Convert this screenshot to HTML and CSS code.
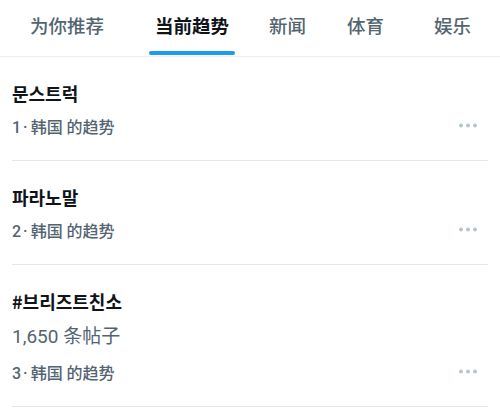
FILE: index.html
```html
<!DOCTYPE html>
<html lang="zh">
<head>
<meta charset="utf-8">
<link rel="stylesheet" href="styles.css">
</head>
<body>
<nav class="tabs">
  <a class="tab t1">为你推荐</a>
  <a class="tab t2 active">当前趋势<span class="bar"></span></a>
  <a class="tab t3">新闻</a>
  <a class="tab t4">体育</a>
  <a class="tab t5">娱乐</a>
</nav>
<ul class="list">
  <li class="item">
    <div class="title" lang="ko">문스트럭</div>
    <div class="meta"><span>1<span class="sep">·</span>韩国 的趋势</span>
      <svg class="more" width="18" height="5" viewBox="0 0 18 5"><circle cx="2" cy="2.5" r="2"/><circle cx="9" cy="2.5" r="2"/><circle cx="16" cy="2.5" r="2"/></svg>
    </div>
  </li>
  <li class="item">
    <div class="title" lang="ko">파라노말</div>
    <div class="meta"><span>2<span class="sep">·</span>韩国 的趋势</span>
      <svg class="more" width="18" height="5" viewBox="0 0 18 5"><circle cx="2" cy="2.5" r="2"/><circle cx="9" cy="2.5" r="2"/><circle cx="16" cy="2.5" r="2"/></svg>
    </div>
  </li>
  <li class="item">
    <div class="title" lang="ko">#브리즈트친소</div>
    <div class="count">1,650 条帖子</div>
    <div class="meta"><span>3<span class="sep">·</span>韩国 的趋势</span>
      <svg class="more" width="18" height="5" viewBox="0 0 18 5"><circle cx="2" cy="2.5" r="2"/><circle cx="9" cy="2.5" r="2"/><circle cx="16" cy="2.5" r="2"/></svg>
    </div>
  </li>
</ul>
</body>
</html>
```
FILE: styles.css
```css
* { box-sizing: border-box; }
html, body { margin: 0; padding: 0; background: #fff; }
body {
  font-family: Roboto, "Noto Sans CJK SC", "Noto Sans CJK KR", sans-serif;
  color: #0f1419;
}
.tabs {
  display: flex;
  height: 57px;
  border-bottom: 1px solid #eceff1;
  padding-left: 30px;
}
.tab {
  position: relative;
  display: flex;
  align-items: center;
  font-size: 18.5px;
  font-weight: 500;
  color: #536471;
  line-height: 1;
  padding-bottom: 1px;
  white-space: nowrap;
}
.tab.active { color: #0f1419; font-weight: 700; }
.t1 { margin-right: 51px; }
.t2 { margin-right: 40px; }
.t3 { margin-right: 41px; }
.t4 { margin-right: 50px; }
.bar {
  position: absolute;
  left: -6px;
  right: -6px;
  bottom: 1px;
  height: 4px;
  border-radius: 2px;
  background: #1d9bf0;
}
.list { list-style: none; margin: 0; padding: 0; }
.item {
  margin: 0 12px;
  padding: 19px 0 19px;
  border-bottom: 1px solid #e6e6e6;
}
.title {
  font-family: "Noto Sans CJK KR", Roboto, sans-serif;
  font-size: 18px;
  font-weight: 700;
  line-height: 34px;
  color: #0f1419;
}
.count {
  font-size: 19px;
  line-height: 38px;
  color: #536471;
}
.meta {
  display: flex;
  align-items: center;
  justify-content: space-between;
  height: 31px;
  font-size: 16px;
  font-weight: 500;
  color: #536471;
}
.sep { margin: 0 3px 0 2px; }
.more { fill: #b7c5d1; margin-right: 11px; }
```
